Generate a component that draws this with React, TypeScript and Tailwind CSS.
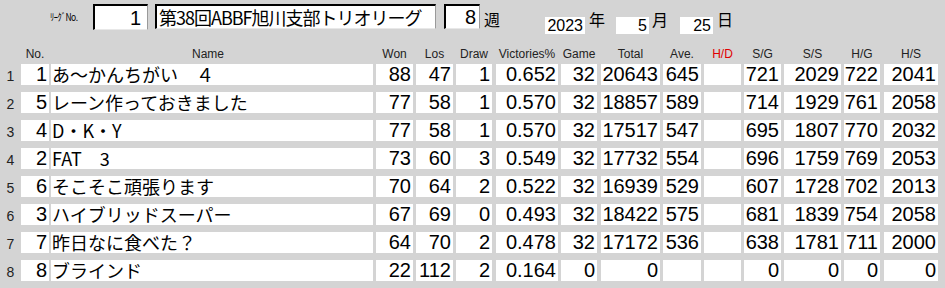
import React from "react";

type Col = { key: string; label: string; cls: string; red?: boolean };

const cols: Col[] = [
  { key: "won", label: "Won", cls: "ml-[3px] w-[37px]" },
  { key: "los", label: "Los", cls: "ml-[3px] w-[37px]" },
  { key: "draw", label: "Draw", cls: "ml-[3px] w-[36px]" },
  { key: "vic", label: "Victories%", cls: "ml-[4px] w-[62px]" },
  { key: "game", label: "Game", cls: "ml-[3px] w-[36px]" },
  { key: "total", label: "Total", cls: "ml-[4px] w-[59px]" },
  { key: "ave", label: "Ave.", cls: "ml-[3px] w-[38px]" },
  { key: "hd", label: "H/D", cls: "ml-[3px] w-[37px]", red: true },
  { key: "sg", label: "S/G", cls: "ml-[3px] w-[37px]" },
  { key: "ss", label: "S/S", cls: "ml-[3px] w-[57px]" },
  { key: "hg", label: "H/G", cls: "ml-[3px] w-[36px]" },
  { key: "hs", label: "H/S", cls: "ml-[4px] w-[54px]" },
];

const rows: { no: string; name: string; v: string[] }[] = [
  { no: "1", name: "あ〜かんちがい　４", v: ["88", "47", "1", "0.652", "32", "20643", "645", "", "721", "2029", "722", "2041"] },
  { no: "5", name: "レーン作っておきました", v: ["77", "58", "1", "0.570", "32", "18857", "589", "", "714", "1929", "761", "2058"] },
  { no: "4", name: "D・K・Y", v: ["77", "58", "1", "0.570", "32", "17517", "547", "", "695", "1807", "770", "2032"] },
  { no: "2", name: "FAT　3", v: ["73", "60", "3", "0.549", "32", "17732", "554", "", "696", "1759", "769", "2053"] },
  { no: "6", name: "そこそこ頑張ります", v: ["70", "64", "2", "0.522", "32", "16939", "529", "", "607", "1728", "702", "2013"] },
  { no: "3", name: "ハイブリッドスーパー", v: ["67", "69", "0", "0.493", "32", "18422", "575", "", "681", "1839", "754", "2058"] },
  { no: "7", name: "昨日なに食べた？", v: ["64", "70", "2", "0.478", "32", "17172", "536", "", "638", "1781", "711", "2000"] },
  { no: "8", name: "ブラインド", v: ["22", "112", "2", "0.164", "0", "0", "", "", "0", "0", "0", "0"] },
];

const sunken =
  "bg-white border-t-2 border-l-2 border-t-black border-l-black border-r border-b border-r-[#9a9a9a] border-b-[#e8e8e8]";

export default function App() {
  return (
    <div
      className="w-[945px] h-[288px] bg-[#d4d4d4] overflow-hidden text-black"
      style={{ fontFamily: '"Liberation Sans", Arial, sans-serif' }}
    >
      {/* top bar */}
      <div className="h-[47px] pt-[4px]">
        <div className="flex items-center h-[26px]">
          <div className="ml-[50px] w-[43px] text-[10px] leading-[12px] tracking-[-0.6px] [font-family:'Noto_Sans_CJK_JP',sans-serif] scale-x-[0.85] origin-left whitespace-nowrap">
            ﾘｰｸﾞNo.
          </div>
          <div className={`${sunken} w-[55px] h-[26px] flex items-center justify-end pr-[6px] text-[20px] leading-[22px]`}>
            1
          </div>
          <div
            className={`${sunken} ml-[7px] w-[281px] h-[25px] self-start flex items-center pl-[2px] text-[18px] leading-[22px] tracking-[-1px] whitespace-nowrap`}
            style={{ fontFamily: '"Noto Sans CJK JP", sans-serif' }}
          >
            第38回ABBF旭川支部トリオリーグ
          </div>
          <div className={`${sunken} ml-[8px] w-[36px] h-[25px] self-start flex items-center justify-end pr-[3px] text-[20px] leading-[22px]`}>
            8
          </div>
          <div
            className="ml-[4px] w-[16px] text-[16px] leading-[20px] pt-[4px]"
            style={{ fontFamily: '"Noto Sans CJK JP", sans-serif' }}
          >
            週
          </div>
          <div className="ml-[45px] w-[40px] h-[17px] mt-[13px] self-start bg-white flex items-center justify-end pr-[2px] text-[16px] leading-[17px]">
            2023
          </div>
          <div
            className="ml-[4px] w-[16px] text-[16px] leading-[20px] pt-[3px]"
            style={{ fontFamily: '"Noto Sans CJK JP", sans-serif' }}
          >
            年
          </div>
          <div className="ml-[11px] w-[33px] h-[17px] mt-[13px] self-start bg-white flex items-center justify-end pr-[2px] text-[16px] leading-[17px]">
            5
          </div>
          <div
            className="ml-[3px] w-[15px] text-[16px] leading-[20px] pt-[3px]"
            style={{ fontFamily: '"Noto Sans CJK JP", sans-serif' }}
          >
            月
          </div>
          <div className="ml-[13px] w-[33px] h-[17px] mt-[13px] self-start bg-white flex items-center justify-end pr-[2px] text-[16px] leading-[17px]">
            25
          </div>
          <div
            className="ml-[4px] w-[15px] text-[16px] leading-[20px] pt-[3px]"
            style={{ fontFamily: '"Noto Sans CJK JP", sans-serif' }}
          >
            日
          </div>
        </div>
      </div>

      {/* header row */}
      <div className="flex h-[17px] text-[12px] leading-[14px] text-[#222]">
        <div className="w-[21px]" />
        <div className="w-[28px] text-center">No.</div>
        <div className="ml-[2px] w-[322px] text-center pr-[8px]">Name</div>
        {cols.map((c) => (
          <div
            key={c.key}
            className={`${c.cls} text-center whitespace-nowrap ${c.red ? "text-[#e00000]" : ""}`}
          >
            {c.label}
          </div>
        ))}
      </div>

      {/* rows */}
      <div className="flex flex-col gap-[7px]">
        {rows.map((r, i) => (
          <div key={i} className="flex h-[21px]">
            <div className="w-[21px] text-center text-[14px] leading-[21px] pt-[2px] text-[#222]">
              {i + 1}
            </div>
            <div className="w-[28px] bg-white text-right pr-[2px] text-[20px] leading-[21px]">
              {r.no}
            </div>
            <div
              className="ml-[2px] w-[322px] bg-white pl-[1px] text-[18px] leading-[21px] whitespace-nowrap"
              style={{ fontFamily: '"Noto Sans CJK JP", sans-serif' }}
            >
              {r.name}
            </div>
            {cols.map((c, j) => (
              <div
                key={c.key}
                className={`${c.cls} bg-white text-right pr-[2px] text-[20px] leading-[21px] whitespace-nowrap`}
              >
                {r.v[j]}
              </div>
            ))}
          </div>
        ))}
      </div>
    </div>
  );
}
